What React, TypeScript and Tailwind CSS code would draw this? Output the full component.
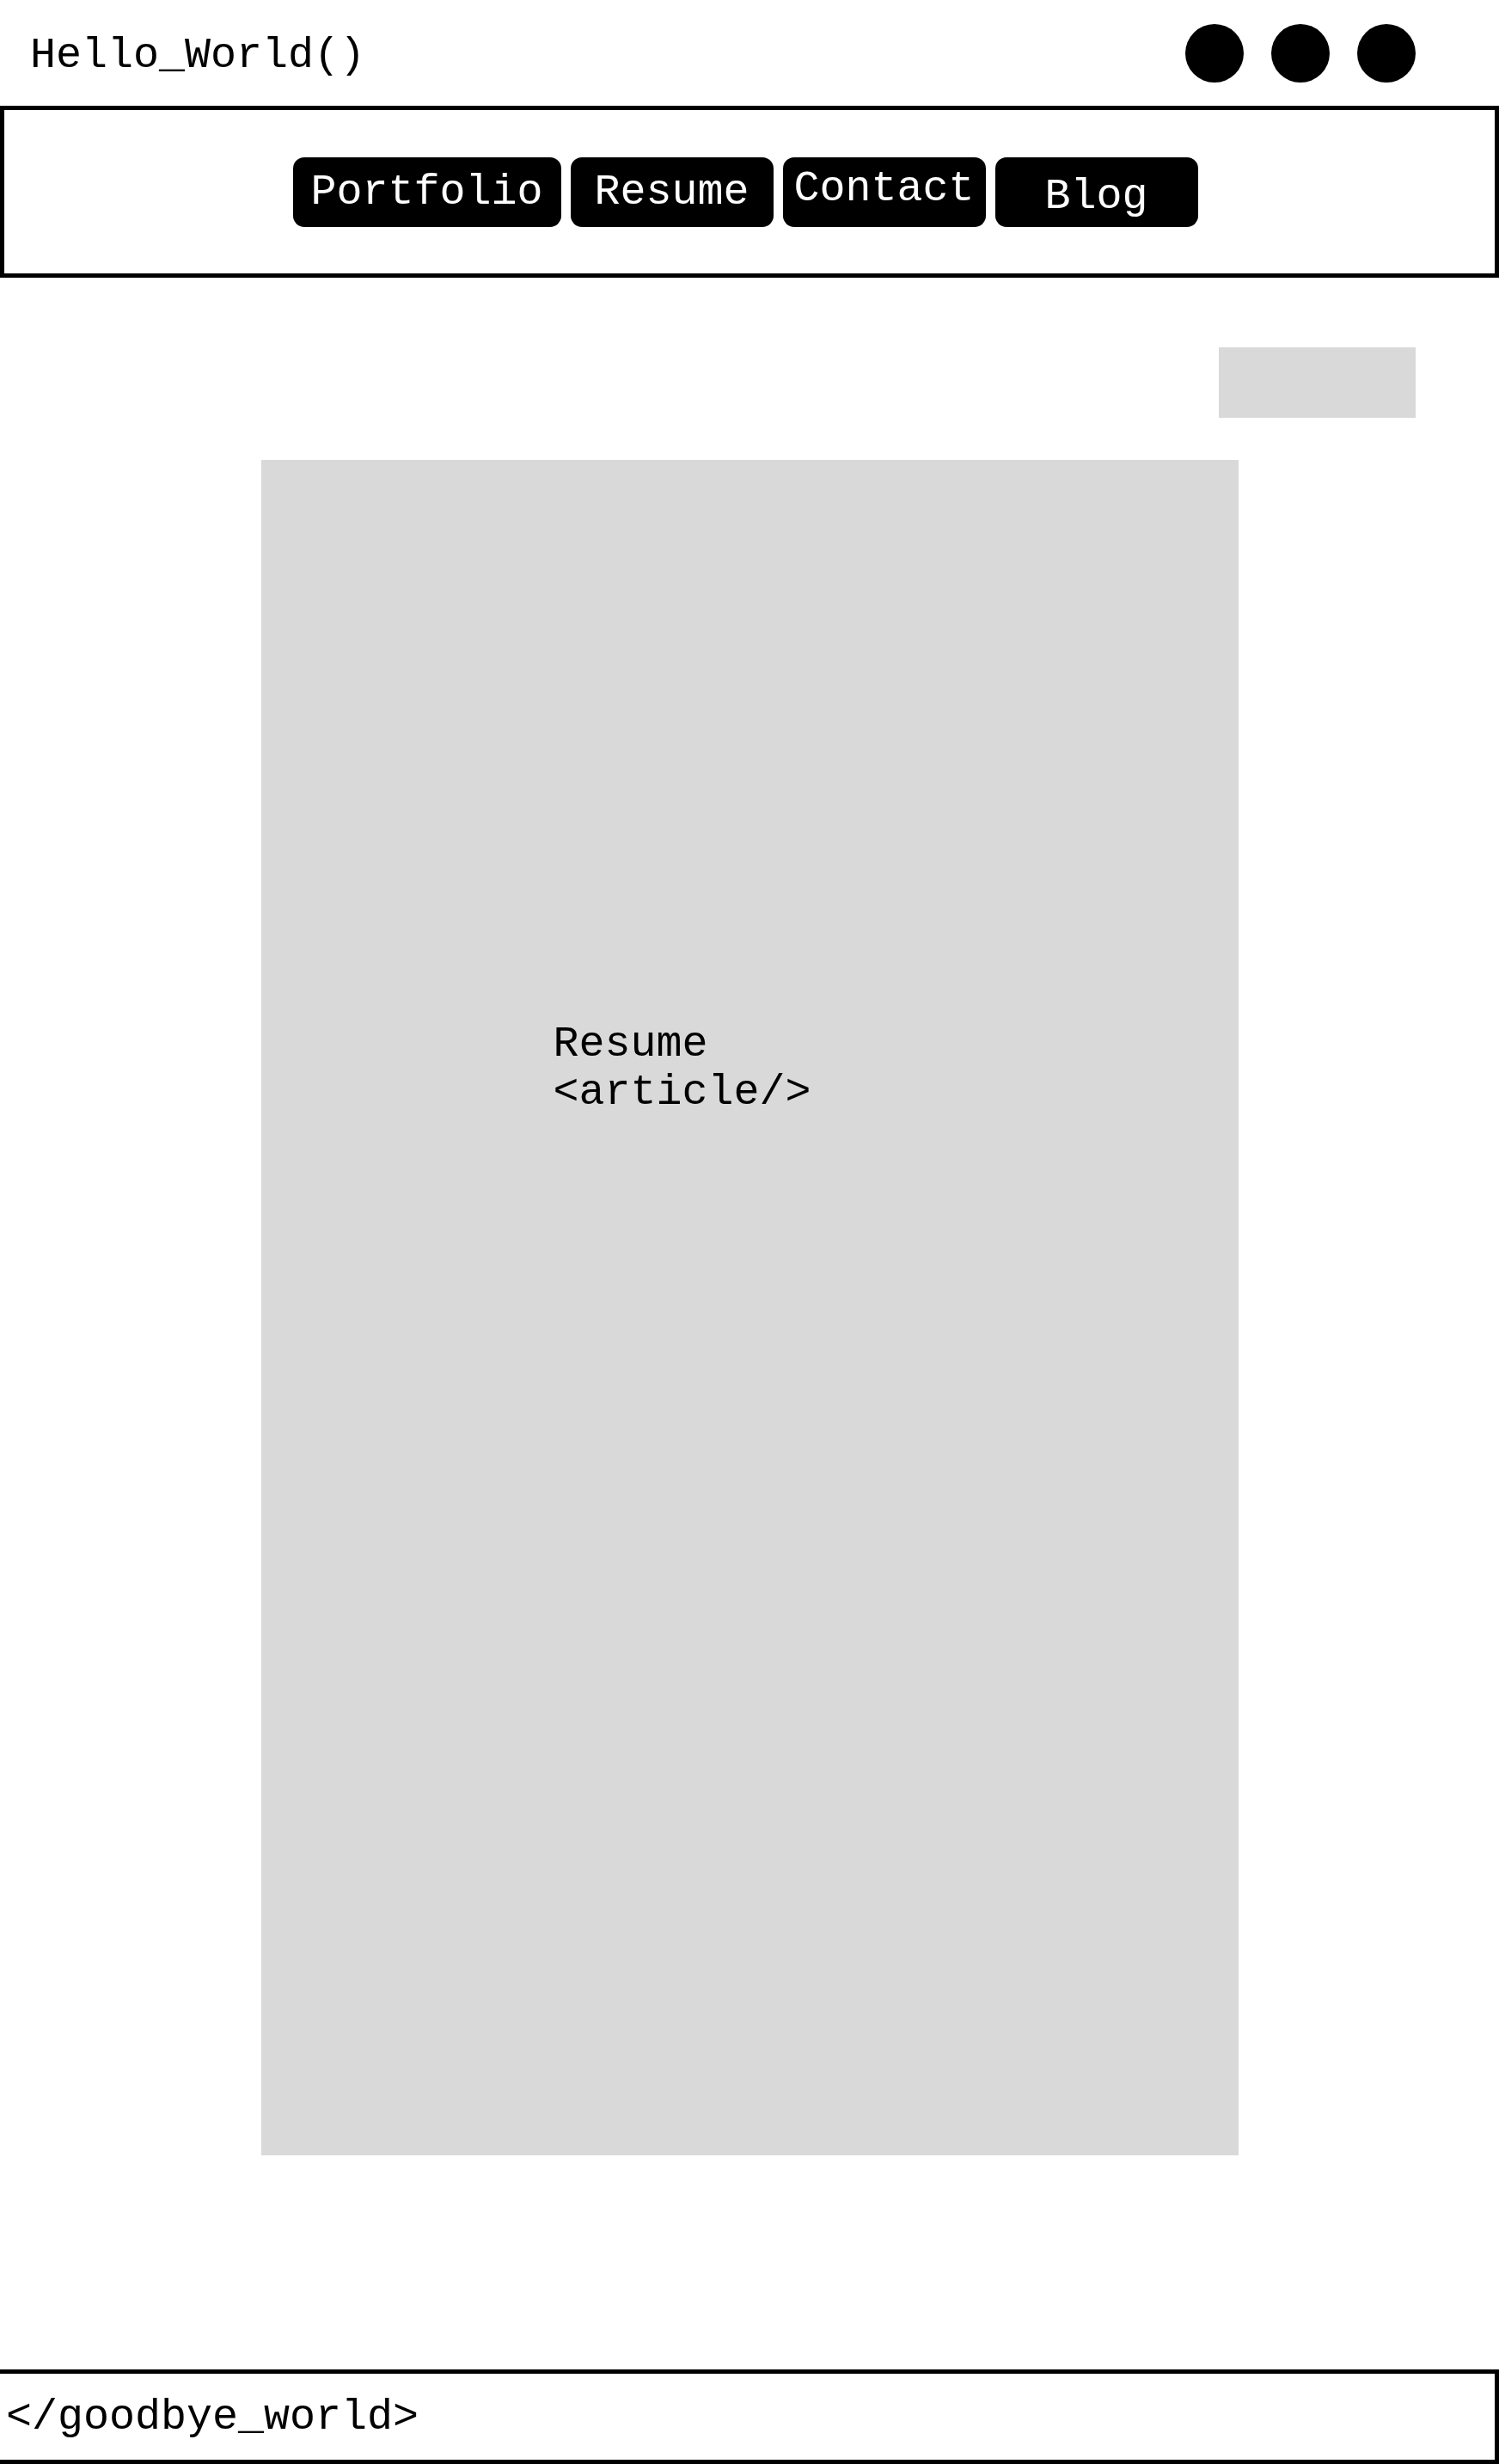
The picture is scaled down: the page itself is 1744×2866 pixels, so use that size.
import React from 'react';

const navItems = [
  { label: 'Portfolio', cls: 'w-[312px]' },
  { label: 'Resume', cls: 'w-[236px]' },
  { label: 'Contact', cls: 'w-[236px] pb-[8px]' },
  { label: 'Blog', cls: 'w-[236px] pt-[10px]' },
];

export default function App() {
  return (
    <div className="min-h-screen flex flex-col bg-white text-black font-['Liberation_Mono','Courier_New',monospace] text-[50px]">
      {/* top bar */}
      <header className="h-[123px] flex items-center justify-between pl-[35px] pr-[97px]">
        <span className="pt-[6px]">Hello_World()</span>
        <div className="flex gap-[32px]">
          <span className="block w-[68px] h-[68px] rounded-full bg-black" />
          <span className="block w-[68px] h-[68px] rounded-full bg-black" />
          <span className="block w-[68px] h-[68px] rounded-full bg-black" />
        </div>
      </header>

      <nav className="h-[200px] border-[5px] border-black flex items-center justify-center gap-[11px] pr-[10px]">
        {navItems.map((item) => (
          <a
            key={item.label}
            href="#"
            className={`h-[81px] rounded-[13px] bg-black text-white flex items-center justify-center ${item.cls}`}
          >
            {item.label}
          </a>
        ))}
      </nav>

      <main className="flex-1 flex flex-col">
        <div className="self-end mr-[97px] mt-[81px] w-[229px] h-[82px] bg-[#d9d9d9]" />
        <article className="mx-auto mt-[49px] w-[1137px] h-[1972px] bg-[#d9d9d9] pt-[652px] pl-[340px] leading-[56px]">
          <div>Resume</div>
          <div>&lt;article/&gt;</div>
        </article>
      </main>

      <footer className="h-[110px] border-[5px] border-l-0 border-black flex items-center pl-[7px]">
        &lt;/goodbye_world&gt;
      </footer>
    </div>
  );
}
